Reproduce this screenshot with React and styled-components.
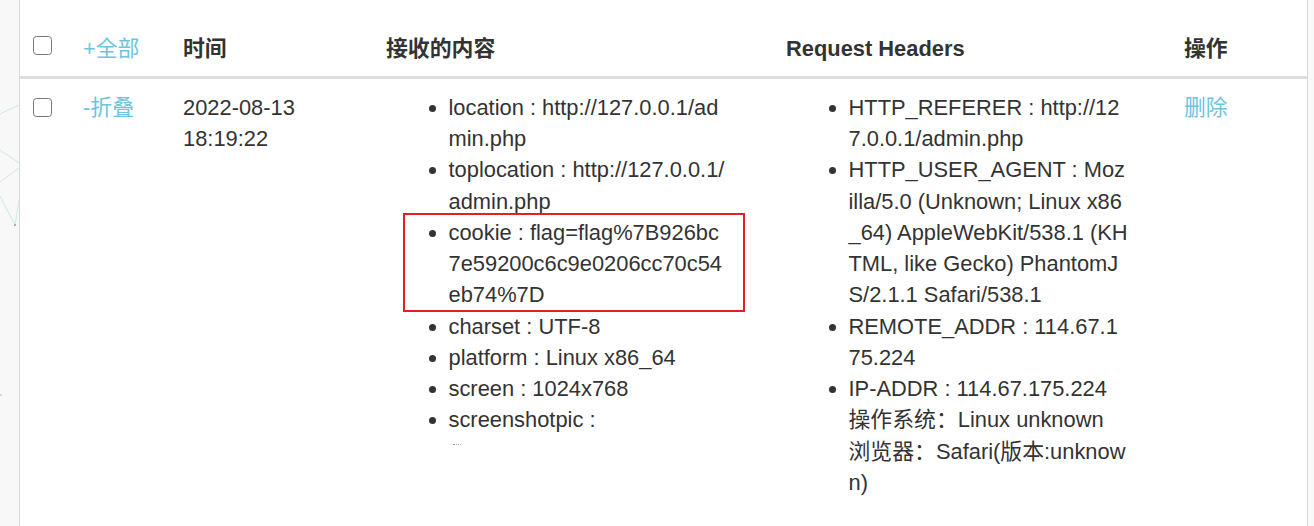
import styled, { createGlobalStyle } from "styled-components"

const GlobalStyle = createGlobalStyle`
	html, body {
		margin: 0;
		padding: 0;
		background: #f8f8f8;
		overflow: hidden;
	}
	body {
		font-family: "Liberation Sans", "Noto Sans CJK SC", sans-serif;
		color: #333;
	}
`

const Page = styled.div`
	position: relative;
	height: 526px;
	padding-left: 19px;
	overflow: hidden;
`

const Backdrop = styled.svg`
	position: absolute;
	left: 0;
	top: 0;
	width: 40px;
	height: 526px;
`

const Panel = styled.div`
	position: relative;
	width: 1289px;
	box-sizing: border-box;
	min-height: 526px;
	padding-top: 20px;
	background: #fff;
	border-left: 1px solid #d9d9d9;
	border-right: 1px solid #d9d9d9;
`

const Table = styled.table`
	width: 100%;
	border-collapse: collapse;
	table-layout: fixed;
	font-size: 21.875px;
	line-height: 31.25px;
`

const Col = styled.col`
	width: ${(p) => p.$w}px;
`

const Th = styled.th`
	padding: 12.5px;
	text-align: left;
	vertical-align: top;
	font-weight: ${(p) => (p.$plain ? "normal" : "bold")};
	border-bottom: 3px solid #ddd;
`

const Td = styled.td`
	padding: 12.5px;
	vertical-align: top;
`

const Check = styled.input.attrs({ type: "checkbox" })`
	appearance: none;
	display: block;
	box-sizing: border-box;
	width: 19px;
	height: 19px;
	margin: ${(p) => p.$top}px 0 0 0;
	border: 1.5px solid #777;
	border-radius: 3.5px;
	background: #fff;
`

const Link = styled.a`
	color: #6cc5dc;
	text-decoration: none;
	cursor: pointer;
`

const List = styled.ul`
	width: 280px;
	margin: 0;
	padding-left: 62.5px;
	word-break: break-all;
`

const Item = styled.li`
	position: relative;

	${(p) =>
		p.$marked &&
		`
		&::after {
			content: "";
			position: absolute;
			left: -46px;
			right: -16px;
			top: -3.5px;
			bottom: -1px;
			border: 2px solid #e41f26;
		}
	`}
`

const ShotFrame = styled.div`
	height: 77px;
`

const ShotMark = styled.div`
	width: 8px;
	height: 1px;
	margin: 8px 0 0 4px;
	border-top: 1px dotted #aaa;
`

const Particles = () => (
	<Backdrop viewBox="0 0 40 526">
		<g stroke="#bfe5d6" strokeWidth="1" opacity="0.7">
			<line x1="0" y1="114" x2="19" y2="105" />
			<line x1="0" y1="150" x2="19" y2="163" />
			<line x1="0" y1="182" x2="19" y2="168" />
			<line x1="0" y1="196" x2="15" y2="225" />
			<line x1="19" y1="200" x2="15" y2="225" />
		</g>
		<circle cx="15" cy="225" r="1" fill="#9a9a9a" />
		<circle cx="1" cy="395" r="0.8" fill="#aaa" />
	</Backdrop>
)

const received = [
	{ text: "location : http://127.0.0.1/admin.php" },
	{ text: "toplocation : http://127.0.0.1/admin.php" },
	{ text: "cookie : flag=flag%7B926bc7e59200c6c9e0206cc70c54eb74%7D", marked: true },
	{ text: "charset : UTF-8" },
	{ text: "platform : Linux x86_64" },
	{ text: "screen : 1024x768" },
]

const headers = [
	"HTTP_REFERER : http://127.0.0.1/admin.php",
	"HTTP_USER_AGENT : Mozilla/5.0 (Unknown; Linux x86_64) AppleWebKit/538.1 (KHTML, like Gecko) PhantomJS/2.1.1 Safari/538.1",
	"REMOTE_ADDR : 114.67.175.224",
]

const App = () => {
	return (
		<Page>
			<GlobalStyle />
			<Particles />
			<Panel>
				<Table>
					<colgroup>
						<Col $w={50.5} />
						<Col $w={100} />
						<Col $w={203} />
						<Col $w={400} />
						<Col $w={398} />
						<Col $w={135.5} />
					</colgroup>
					<thead>
						<tr>
							<Th>
								<Check $top={3.5} />
							</Th>
							<Th $plain>
								<Link>+全部</Link>
							</Th>
							<Th>时间</Th>
							<Th>接收的内容</Th>
							<Th>Request Headers</Th>
							<Th>操作</Th>
						</tr>
					</thead>
					<tbody>
						<tr>
							<Td>
								<Check $top={6.25} />
							</Td>
							<Td>
								<Link>-折叠</Link>
							</Td>
							<Td>2022-08-13 18:19:22</Td>
							<Td>
								<List>
									{received.map((r) => (
										<Item key={r.text} $marked={r.marked}>
											{r.text}
										</Item>
									))}
									<Item>
										screenshotpic :
										<ShotFrame>
											<ShotMark />
										</ShotFrame>
									</Item>
									<Item>htmlyuanma : &lt;html&gt;</Item>
								</List>
							</Td>
							<Td>
								<List>
									{headers.map((h) => (
										<Item key={h}>{h}</Item>
									))}
									<Item>
										IP-ADDR : 114.67.175.224
										<br />
										操作系统：Linux unknown
										<br />
										浏览器：Safari(版本:unknown)
									</Item>
								</List>
							</Td>
							<Td>
								<Link>删除</Link>
							</Td>
						</tr>
					</tbody>
				</Table>
			</Panel>
		</Page>
	)
}

export default App
